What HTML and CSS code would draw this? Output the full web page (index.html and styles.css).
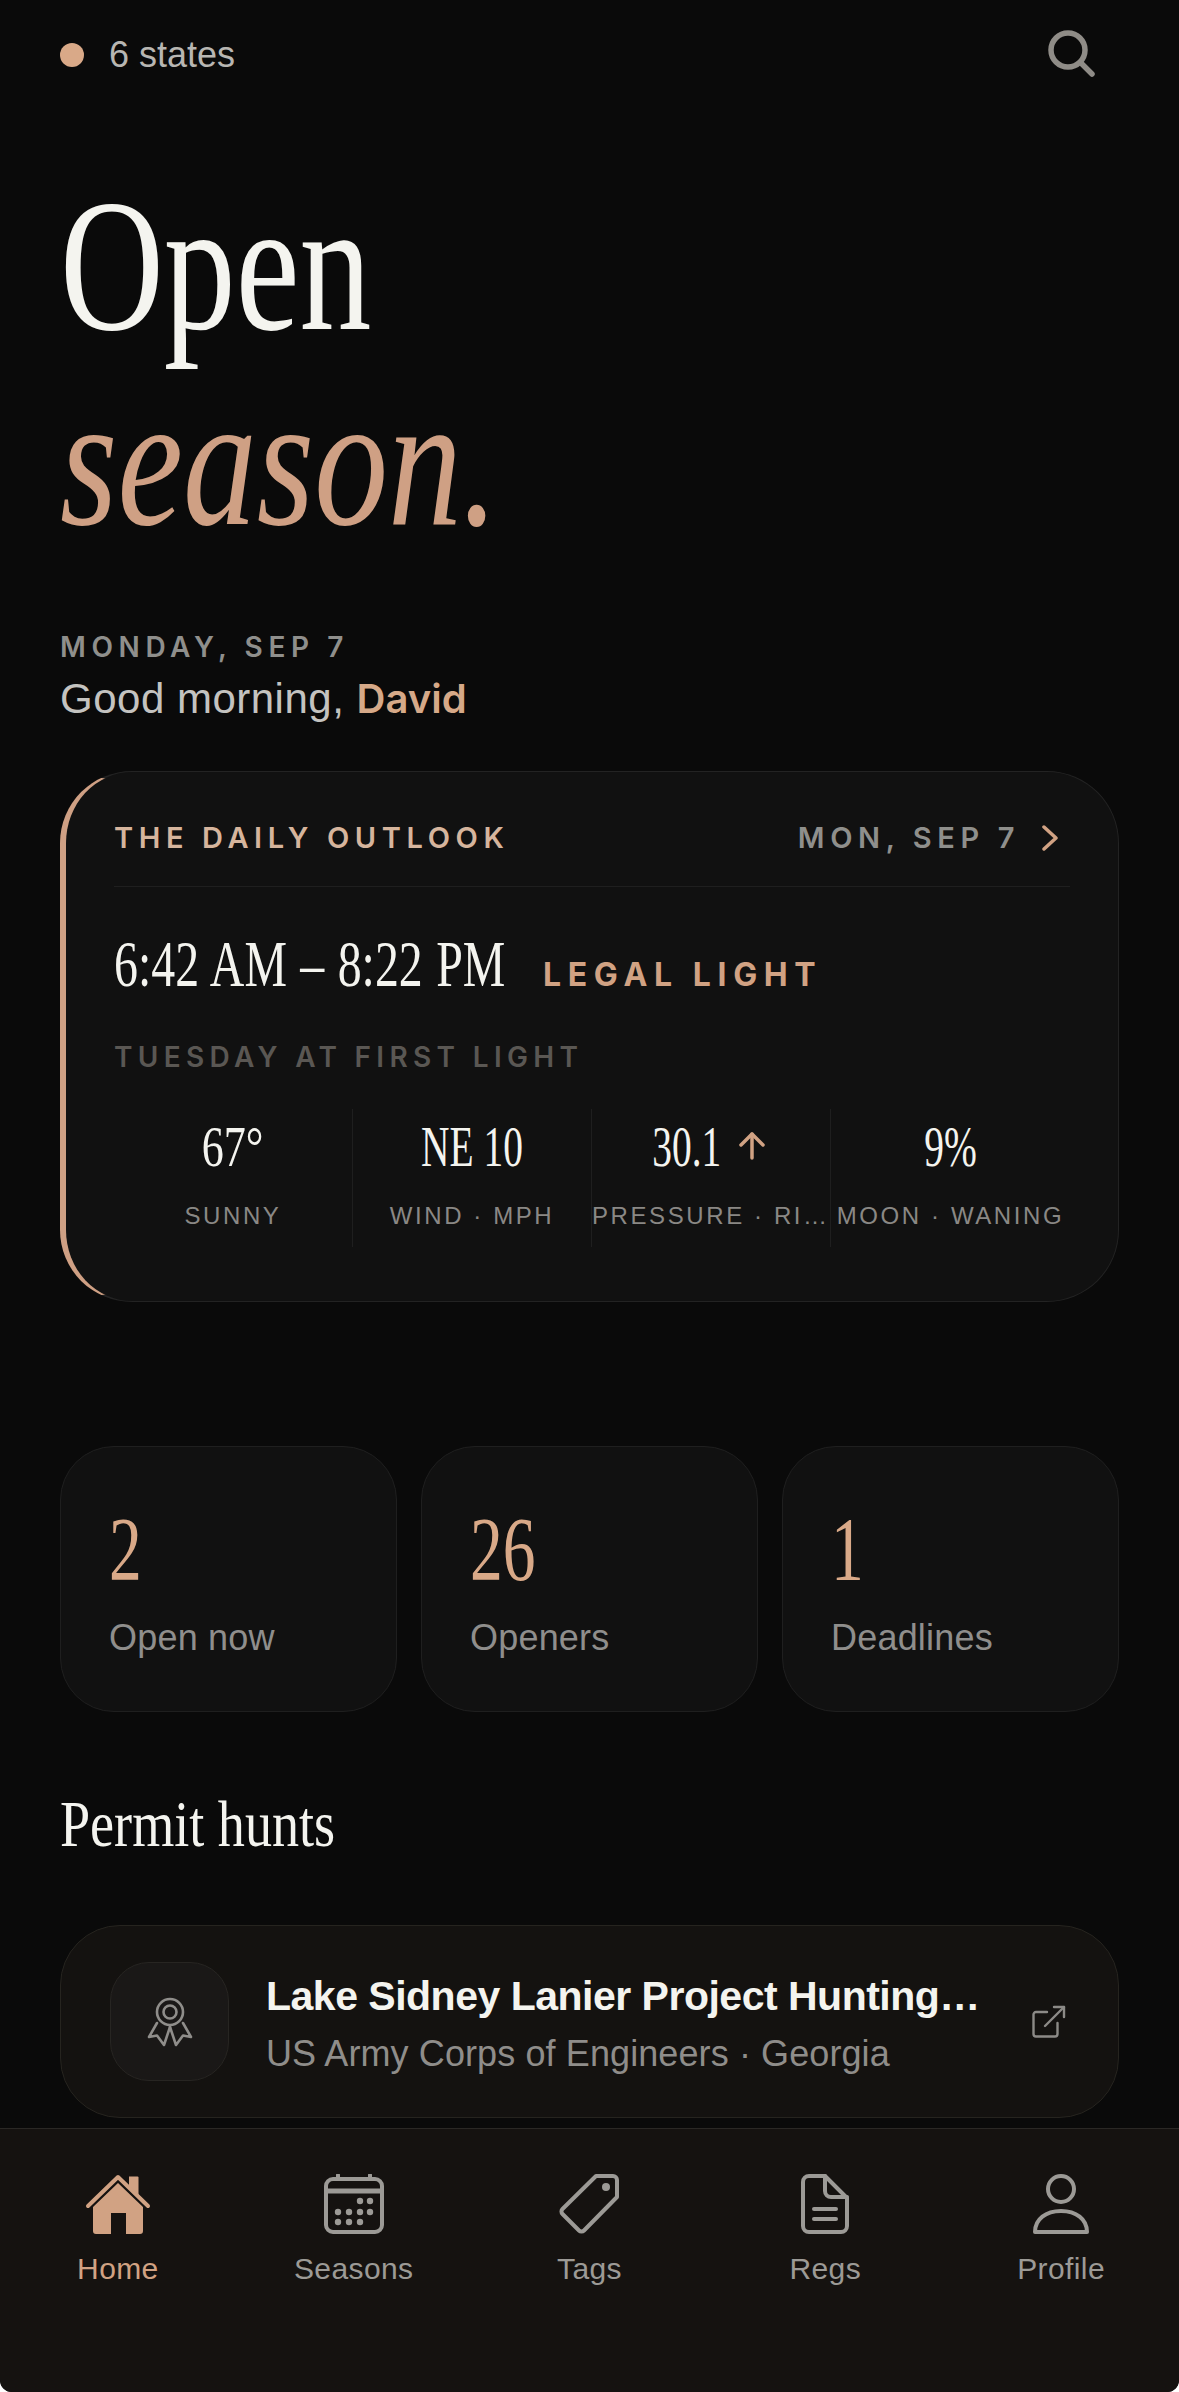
FILE: index.html
```html
<!DOCTYPE html>
<html lang="en">
<head>
    <meta charset="UTF-8">
    <meta name="viewport" content="width=device-width, initial-scale=1.0">
    <title>Open season</title>
    <link rel="stylesheet" href="styles.css">
</head>
<body>

    <div class="screen">
        <main class="content">
            <header class="topbar">
                <div class="region">
                    <span class="region-dot"></span>
                    <span>6 states</span>
                </div>
                <svg class="search-icon" width="50" height="50" viewBox="0 0 50 50" fill="none" stroke="#8f8c87" stroke-width="5.5" stroke-linecap="round">
                    <circle cx="20" cy="20" r="17"></circle>
                    <line x1="32.5" y1="32.5" x2="44" y2="44"></line>
                </svg>
            </header>

            <h1 class="hero">
                <span class="hero-line">Open</span>
                <span class="hero-line hero-accent">season.</span>
            </h1>

            <p class="date-line">MONDAY, SEP 7</p>
            <p class="greeting">Good morning, <span class="greeting-name">David</span></p>

            <section class="outlook">
                <div class="outlook-head">
                    <span class="outlook-title">THE DAILY OUTLOOK</span>
                    <span class="outlook-date">
                        MON, SEP 7
                        <svg width="16" height="26" viewBox="0 0 16 26" fill="none" stroke="#d1a283" stroke-width="3.5" stroke-linecap="round" stroke-linejoin="round">
                            <polyline points="2,2 14,13 2,24"></polyline>
                        </svg>
                    </span>
                </div>

                <div class="light-row">
                    <span class="light-box"><span class="light-time">6:42 AM – 8:22 PM</span></span>
                    <span class="light-label">LEGAL LIGHT</span>
                </div>
                <p class="next-light">TUESDAY AT FIRST LIGHT</p>

                <div class="stats">
                    <div class="stat">
                        <div class="stat-value"><span class="stat-num stat-num-wide">67°</span></div>
                        <div class="stat-label">SUNNY</div>
                    </div>
                    <div class="stat">
                        <div class="stat-value"><span class="stat-num">NE 10</span></div>
                        <div class="stat-label">WIND · MPH</div>
                    </div>
                    <div class="stat">
                        <div class="stat-value">
                            <span class="stat-num stat-num-short">30.1</span>
                            <svg class="stat-arrow" width="28" height="28" viewBox="0 0 28 28" fill="none" stroke="#d1a283" stroke-width="3.5" stroke-linecap="round" stroke-linejoin="round">
                                <line x1="14" y1="26" x2="14" y2="2"></line>
                                <polyline points="3,13 14,2 25,13"></polyline>
                            </svg>
                        </div>
                        <div class="stat-label">PRESSURE · RISING</div>
                    </div>
                    <div class="stat">
                        <div class="stat-value"><span class="stat-num">9%</span></div>
                        <div class="stat-label">MOON · WANING</div>
                    </div>
                </div>
            </section>

            <section class="counts">
                <div class="count-card">
                    <div class="count-value"><span class="count-num">2</span></div>
                    <div class="count-label">Open now</div>
                </div>
                <div class="count-card">
                    <div class="count-value"><span class="count-num">26</span></div>
                    <div class="count-label">Openers</div>
                </div>
                <div class="count-card">
                    <div class="count-value"><span class="count-num">1</span></div>
                    <div class="count-label">Deadlines</div>
                </div>
            </section>

            <h2 class="section-title"><span class="section-title-text">Permit hunts</span></h2>

            <div class="permit-card">
                <div class="permit-icon">
                    <svg width="46" height="50" viewBox="0 0 46 50" fill="none" stroke="#8f8d8a" stroke-width="2.6" stroke-linejoin="round" stroke-linecap="round">
                        <circle cx="23" cy="15" r="13"></circle>
                        <circle cx="23" cy="15" r="6.5"></circle>
                        <polyline points="10,26 2,40 10,38.5 17,48 23,30"></polyline>
                        <polyline points="36,26 44,40 36,38.5 29,48 23,30"></polyline>
                    </svg>
                </div>
                <div class="permit-text">
                    <div class="permit-name">Lake Sidney Lanier Project Hunting Permit</div>
                    <div class="permit-sub">US Army Corps of Engineers · Georgia</div>
                </div>
                <svg class="permit-link" width="34" height="34" viewBox="0 0 34 34" fill="none" stroke="#8c8a87" stroke-width="2.4" stroke-linecap="round" stroke-linejoin="round">
                    <path d="M15 7H4a2.5 2.5 0 0 0-2.5 2.5V29A2.5 2.5 0 0 0 4 31.500H23a2.500 2.500 0 0 0 2.500-2.500V18"></path>
                    <line x1="13" y1="21" x2="32" y2="2"></line>
                    <polyline points="22,2 32,2 32,12"></polyline>
                </svg>
            </div>
        </main>

        <nav class="tabbar">
            <div class="tab tab-active">
                <svg width="66" height="60" viewBox="0 0 66 60">
                    <path fill="#d1a283" d="M44 2.500h8.500a1 1 0 0 1 1 1V21L44 12z"></path>
                    <path fill="none" stroke="#d1a283" stroke-width="4" stroke-linecap="round" stroke-linejoin="round" d="M3 32L33 3l30 29"></path>
                    <path fill="#d1a283" d="M33 9l25 24v24a3 3 0 0 1-3 3H41V39H26v21H11a3 3 0 0 1-3-3V33z"></path>
                </svg>
                <span>Home</span>
            </div>
            <div class="tab">
                <svg width="60" height="60" viewBox="0 0 60 60" fill="none" stroke="#9c9a96" stroke-width="4" stroke-linecap="round">
                    <rect x="2" y="5" width="56" height="53" rx="7"></rect>
                    <line x1="2" y1="17" x2="58" y2="17" stroke-width="5"></line>
                    <line x1="14" y1="1" x2="14" y2="5"></line>
                    <line x1="46" y1="1" x2="46" y2="5"></line>
                    <g fill="#9c9a96" stroke="none">
                        <circle cx="36" cy="27" r="3.200"></circle>
                        <circle cx="46" cy="27" r="3.200"></circle>
                        <circle cx="14" cy="38" r="3.200"></circle>
                        <circle cx="25" cy="38" r="3.200"></circle>
                        <circle cx="36" cy="38" r="3.200"></circle>
                        <circle cx="46" cy="38" r="3.200"></circle>
                        <circle cx="14" cy="48" r="3.200"></circle>
                        <circle cx="25" cy="48" r="3.200"></circle>
                        <circle cx="36" cy="48" r="3.200"></circle>
                    </g>
                </svg>
                <span>Seasons</span>
            </div>
            <div class="tab">
                <svg width="60" height="60" viewBox="0 0 60 60" fill="none" stroke="#9c9a96" stroke-width="4" stroke-linejoin="round">
                    <path d="M37 2H54a4 4 0 0 1 4 4V23L25 56.500a3.500 3.500 0 0 1-5 0L3.500 40a3.500 3.500 0 0 1 0-5z"></path>
                    <circle cx="47" cy="13" r="4" fill="#9c9a96" stroke="none"></circle>
                </svg>
                <span>Tags</span>
            </div>
            <div class="tab">
                <svg width="48" height="60" viewBox="0 0 48 60" fill="none" stroke="#9c9a96" stroke-width="4" stroke-linecap="round" stroke-linejoin="round">
                    <path d="M24 2H8a6 6 0 0 0-6 6V52a6 6 0 0 0 6 6H40a6 6 0 0 0 6-6V24z"></path>
                    <path d="M24 2V17a6 6 0 0 0 6 6H46"></path>
                    <line x1="13" y1="35" x2="35" y2="35"></line>
                    <line x1="13" y1="45" x2="35" y2="45"></line>
                </svg>
                <span>Regs</span>
            </div>
            <div class="tab">
                <svg width="56" height="60" viewBox="0 0 56 60" fill="none" stroke="#9c9a96" stroke-width="4" stroke-linejoin="round">
                    <circle cx="28" cy="15" r="13"></circle>
                    <path d="M2 58C2 45 13 37 28 37S54 45 54 58z"></path>
                </svg>
                <span>Profile</span>
            </div>
        </nav>
    </div>

</body>
</html>
```

FILE: styles.css
```css
/* General Styles */
* {
    box-sizing: border-box;
}

body {
    margin: 0;
    background-color: #fff;
    font-family: 'Liberation Sans', Arial, sans-serif;
}

.screen {
    width: 1179px;
    height: 2392px;
    background-color: #0a0a0a;
    display: flex;
    flex-direction: column;
    overflow: hidden;
    border-radius: 0 0 12px 12px;
}

.content {
    flex: 1;
    min-height: 0;
    padding: 0 60px;
}

/* Top bar */
.topbar {
    display: flex;
    justify-content: space-between;
    align-items: center;
    height: 110px;
    padding-right: 21px;
}

.region {
    display: flex;
    align-items: center;
    gap: 25px;
    font-size: 36px;
    color: #b8b6b2;
}

.region-dot {
    width: 24px;
    height: 24px;
    border-radius: 50%;
    background-color: #d9a988;
}

/* Hero */
.hero {
    margin: 58px 0 0;
    font-family: 'Liberation Serif', serif;
    font-size: 188px;
    font-weight: 400;
    line-height: 195px;
}

.hero-line {
    display: block;
    color: #f4f4ef;
    transform: scaleX(0.765);
    transform-origin: left;
}

.hero-accent {
    color: #cfa084;
    font-style: italic;
    transform: scaleX(0.785);
}

.date-line {
    margin: 0;
    padding-top: 72px;
    font-family: 'Inter', sans-serif;
    font-size: 28px;
    font-weight: 600;
    letter-spacing: 0.2em;
    color: #8f8f8c;
}

.greeting {
    margin: 10px 0 0;
    font-size: 42px;
    letter-spacing: 0.5px;
    color: #c4c3c0;
}

.greeting-name {
    font-family: 'Inter', sans-serif;
    font-size: 40px;
    font-weight: 600;
    letter-spacing: 0;
    color: #d6a988;
}

/* Daily outlook card */
.outlook {
    margin-top: 48px;
    height: 531px;
    padding: 37px 48px 0;
    background-color: #111111;
    border: 1px solid #232323;
    border-left: 6px solid #cfa084;
    border-radius: 72px;
}

.outlook-head {
    display: flex;
    justify-content: space-between;
    align-items: center;
    height: 78px;
    border-bottom: 1px solid #1f1f1f;
    font-family: 'Inter', sans-serif;
    font-size: 29px;
    font-weight: 600;
    letter-spacing: 0.193em;
    padding-bottom: 20px;
}

.outlook-title {
    color: #d6b59d;
}

.outlook-date {
    display: flex;
    align-items: center;
    gap: 22px;
    color: #8f8f8c;
    padding-right: 12px;
}

.light-row {
    display: flex;
    align-items: baseline;
    margin-top: 39px;
}

.light-box {
    width: 429px;
    flex-shrink: 0;
}

.light-time {
    display: inline-block;
    white-space: nowrap;
    font-family: 'Liberation Serif', serif;
    font-size: 66px;
    word-spacing: 2px;
    color: #f4f4ef;
    transform: scaleX(0.725);
    transform-origin: left;
}

.light-label {
    font-family: 'Inter', sans-serif;
    font-size: 32px;
    font-weight: 700;
    letter-spacing: 0.207em;
    color: #d1a283;
}

.next-light {
    margin: 38px 0 0;
    font-family: 'Inter', sans-serif;
    font-size: 28px;
    font-weight: 600;
    letter-spacing: 0.19em;
    color: #5a5753;
}

.stats {
    display: grid;
    grid-template-columns: repeat(4, 1fr);
    margin-top: 35px;
}

.stat {
    min-width: 0;
    height: 138px;
    padding: 3px 0 0;
    border-right: 1px solid #1f1f1f;
    text-align: center;
}

.stat:last-child {
    border-right: none;
}

.stat-value {
    display: flex;
    justify-content: center;
    align-items: center;
    height: 68px;
}

.stat-num {
    display: inline-block;
    white-space: nowrap;
    font-family: 'Liberation Serif', serif;
    font-size: 58px;
    color: #f4f4ef;
    transform: scaleX(0.68);
}

.stat-num-wide {
    transform: scaleX(0.76);
}

.stat-num-short {
    margin: 0 -18px 0 -20px;
}

.stat-arrow {
    margin-left: 18px;
}

.stat-label {
    margin-top: 22px;
    font-size: 24px;
    letter-spacing: 0.108em;
    color: #8a8885;
    white-space: nowrap;
    overflow: hidden;
    text-overflow: ellipsis;
}

/* Count cards */
.counts {
    display: grid;
    grid-template-columns: repeat(3, 1fr);
    gap: 24px;
    margin-top: 144px;
}

.count-card {
    height: 266px;
    padding: 53px 48px 0;
    background-color: #111111;
    border: 1px solid #1f1f1f;
    border-radius: 54px;
}

.count-value {
    height: 100px;
}

.count-num {
    display: inline-block;
    font-family: 'Liberation Serif', serif;
    font-size: 91px;
    line-height: 100px;
    color: #d9a988;
    transform: scaleX(0.72);
    transform-origin: left;
}

.count-label {
    margin-top: 17px;
    font-size: 36px;
    letter-spacing: 0.2px;
    color: #8f8e8c;
}

/* Permit hunts */
.section-title {
    margin: 72px 0 0;
    font-family: 'Liberation Serif', serif;
    font-size: 66px;
    font-weight: 400;
    line-height: 80px;
    color: #f4f4ef;
}

.section-title-text {
    display: inline-block;
    transform: scaleX(0.82);
    transform-origin: left;
}

.permit-card {
    display: flex;
    align-items: center;
    margin-top: 61px;
    height: 193px;
    padding: 0 52px 0 49px;
    background-color: #141210;
    border: 1px solid #26241f;
    border-radius: 60px;
}

.permit-icon {
    display: flex;
    align-items: center;
    justify-content: center;
    flex-shrink: 0;
    width: 119px;
    height: 119px;
    background-color: #1a1817;
    border: 1px solid #272522;
    border-radius: 39px;
}

.permit-text {
    flex: 1;
    min-width: 0;
    margin: 0 48px 0 37px;
    padding-top: 4px;
}

.permit-name {
    font-size: 41px;
    font-weight: 700;
    letter-spacing: -0.5px;
    color: #f4f4ef;
    white-space: nowrap;
    overflow: hidden;
    text-overflow: ellipsis;
}

.permit-sub {
    margin-top: 13px;
    font-size: 36px;
    letter-spacing: 0.1px;
    color: #8f8d8a;
}

.permit-link {
    flex-shrink: 0;
}

/* Bottom tabs */
.tabbar {
    display: grid;
    grid-template-columns: repeat(5, 1fr);
    flex-shrink: 0;
    height: 264px;
    padding-top: 45px;
    background-color: #151210;
    border-top: 1px solid #2a2825;
}

.tab {
    display: flex;
    flex-direction: column;
    align-items: center;
    gap: 18px;
    font-size: 30px;
    letter-spacing: 0.4px;
    color: #9c9a96;
}

.tab-active {
    color: #d1a283;
}
```
